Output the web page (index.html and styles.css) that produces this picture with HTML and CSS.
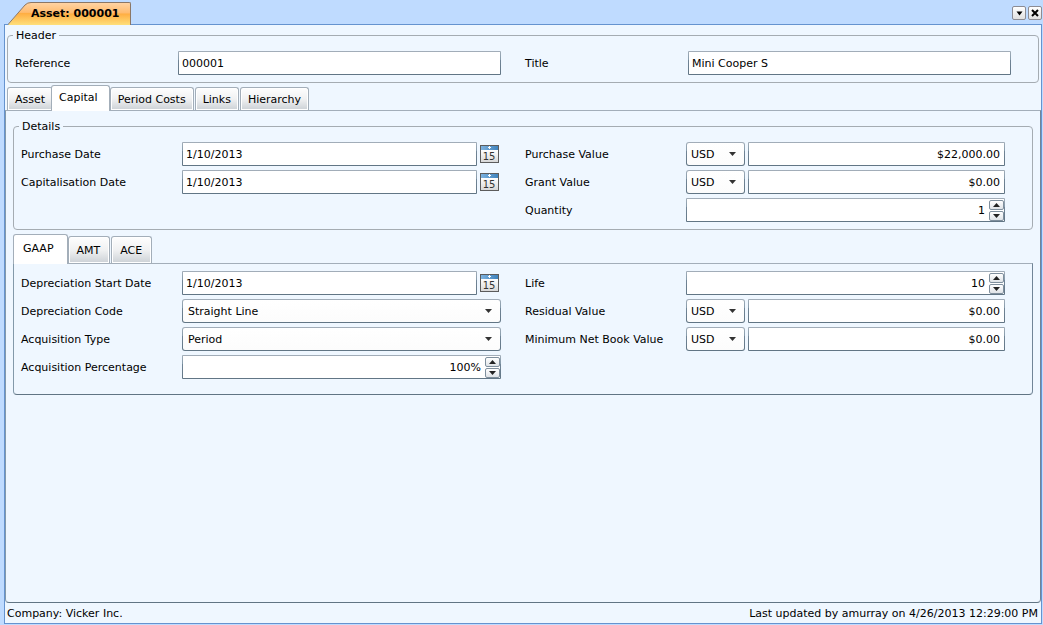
FILE: index.html
```html
<!DOCTYPE html>
<html lang="en">
<head>
  <meta charset="UTF-8">
  <title>Asset: 000001</title>
  <link rel="stylesheet" href="styles.css">
</head>
<body>

  <!-- Document tab strip -->
  <div class="title-bar">
    <button class="doc-tab">
      <svg class="slope" width="23" height="23" viewBox="0 0 23 23">
        <defs>
          <linearGradient id="orange" x1="0" y1="0" x2="0" y2="1">
            <stop offset="0" stop-color="#ffd3a3"/>
            <stop offset="0.45" stop-color="#ffbb6e"/>
            <stop offset="0.5" stop-color="#ffae42"/>
            <stop offset="1" stop-color="#fedf7b"/>
          </linearGradient>
        </defs>
        <path d="M0 23 L17 3 Q19.500 0 23 0 V23 Z" fill="url(#orange)"/>
        <path d="M0 22.500 L17 3 Q19.500 0.500 23 0.500" fill="none" stroke="#8b7766"/>
      </svg>
      <span class="doc-label">Asset: 000001</span>
    </button>
    <div class="window-buttons">
      <button aria-label="Window list"><svg width="7" height="5" viewBox="0 0 7 5"><path d="M0.500 0.500h6L3.500 4.500z" fill="#000"/></svg></button>
      <button aria-label="Close"><svg width="8" height="8" viewBox="0 0 8 8"><path d="M1 1l6 6M7 1l-6 6" stroke="#000" stroke-width="2"/></svg></button>
    </div>
  </div>

  <main class="window">
    <fieldset class="group header-group">
      <legend>Header</legend>
      <div class="columns">
        <div class="fields wide-labels">
          <label for="reference">Reference</label>
          <input class="box" id="reference" type="text" value="000001">
        </div>
        <div class="fields wide-labels">
          <label for="title">Title</label>
          <input class="box" id="title" type="text" value="Mini Cooper S">
        </div>
      </div>
    </fieldset>

    <nav class="tabs main-tabs">
      <button>Asset</button>
      <button class="selected">Capital</button>
      <button>Period Costs</button>
      <button>Links</button>
      <button>Hierarchy</button>
    </nav>

    <section class="panel main-panel">
      <fieldset class="group">
        <legend>Details</legend>
        <div class="columns">
          <div class="fields">
            <label for="purchase-date">Purchase Date</label>
            <div class="date">
              <input class="box" id="purchase-date" type="text" value="1/10/2013">
              <button aria-label="Pick purchase date"><svg width="19" height="18" viewBox="0 0 19 18"><use href="#calendar"/></svg></button>
            </div>
            <label for="capitalisation-date">Capitalisation Date</label>
            <div class="date">
              <input class="box" id="capitalisation-date" type="text" value="1/10/2013">
              <button aria-label="Pick capitalisation date"><svg width="19" height="18" viewBox="0 0 19 18"><use href="#calendar"/></svg></button>
            </div>
          </div>
          <div class="fields">
            <label for="purchase-value">Purchase Value</label>
            <div class="money">
              <select class="box" aria-label="Purchase currency"><option>USD</option></select>
              <input class="box number" id="purchase-value" type="text" value="$22,000.00">
            </div>
            <label for="grant-value">Grant Value</label>
            <div class="money">
              <select class="box" aria-label="Grant currency"><option>USD</option></select>
              <input class="box number" id="grant-value" type="text" value="$0.00">
            </div>
            <label for="quantity">Quantity</label>
            <div class="box spinner">
              <input class="number" id="quantity" type="text" value="1">
              <div class="arrows">
                <button aria-label="Increase"><svg width="7" height="4" viewBox="0 0 7 4"><path d="M0 4L3.500 0L7 4z"/></svg></button>
                <button aria-label="Decrease"><svg width="7" height="4" viewBox="0 0 7 4"><path d="M0 0h7L3.500 4z"/></svg></button>
              </div>
            </div>
          </div>
        </div>
      </fieldset>

      <nav class="tabs book-tabs">
        <button class="selected">GAAP</button>
        <button>AMT</button>
        <button>ACE</button>
      </nav>

      <section class="panel book-panel">
        <div class="columns">
          <div class="fields">
            <label for="start-date">Depreciation Start Date</label>
            <div class="date">
              <input class="box" id="start-date" type="text" value="1/10/2013">
              <button aria-label="Pick start date"><svg width="19" height="18" viewBox="0 0 19 18"><use href="#calendar"/></svg></button>
            </div>
            <label for="code">Depreciation Code</label>
            <select class="box" id="code"><option>Straight Line</option></select>
            <label for="acquisition-type">Acquisition Type</label>
            <select class="box" id="acquisition-type"><option>Period</option></select>
            <label for="percentage">Acquisition Percentage</label>
            <div class="box spinner">
              <input class="number" id="percentage" type="text" value="100%">
              <div class="arrows">
                <button aria-label="Increase"><svg width="7" height="4" viewBox="0 0 7 4"><path d="M0 4L3.500 0L7 4z"/></svg></button>
                <button aria-label="Decrease"><svg width="7" height="4" viewBox="0 0 7 4"><path d="M0 0h7L3.500 4z"/></svg></button>
              </div>
            </div>
          </div>
          <div class="fields">
            <label for="life">Life</label>
            <div class="box spinner">
              <input class="number" id="life" type="text" value="10">
              <div class="arrows">
                <button aria-label="Increase"><svg width="7" height="4" viewBox="0 0 7 4"><path d="M0 4L3.500 0L7 4z"/></svg></button>
                <button aria-label="Decrease"><svg width="7" height="4" viewBox="0 0 7 4"><path d="M0 0h7L3.500 4z"/></svg></button>
              </div>
            </div>
            <label for="residual-value">Residual Value</label>
            <div class="money">
              <select class="box" aria-label="Residual currency"><option>USD</option></select>
              <input class="box number" id="residual-value" type="text" value="$0.00">
            </div>
            <label for="book-value">Minimum Net Book Value</label>
            <div class="money">
              <select class="box" aria-label="Book value currency"><option>USD</option></select>
              <input class="box number" id="book-value" type="text" value="$0.00">
            </div>
          </div>
        </div>
      </section>
    </section>

    <footer class="status">
      <span>Company: Vicker Inc.</span>
      <span>Last updated by amurray on 4/26/2013 12:29:00 PM</span>
    </footer>
  </main>

  <!-- Shared calendar icon -->
  <svg class="symbols" width="0" height="0">
    <defs>
      <linearGradient id="page" x1="0" y1="0" x2="0" y2="1">
        <stop offset="0" stop-color="#fff"/>
        <stop offset="1" stop-color="#d8d8d8"/>
      </linearGradient>
      <linearGradient id="strip" x1="0" y1="0" x2="1" y2="0">
        <stop offset="0" stop-color="#7db2df"/>
        <stop offset="1" stop-color="#3f83bd"/>
      </linearGradient>
      <symbol id="calendar" viewBox="0 0 19 18">
        <rect width="19" height="18" fill="#5c5c5c"/>
        <rect x="1" y="1" width="17" height="4" fill="url(#strip)"/>
        <rect x="1" y="5" width="17" height="12" fill="url(#page)"/>
        <path d="M8 2.500h3M9.500 1v3" stroke="#fff"/>
        <text x="9" y="15" text-anchor="middle" font-size="10" font-family="DejaVu Sans, sans-serif" fill="#333">15</text>
      </symbol>
    </defs>
  </svg>

</body>
</html>
```
FILE: styles.css
```css
* {
  box-sizing: border-box;
}

body {
  margin: 0;
  padding: 0 1px 1px 4px;
  min-height: 100vh;
  display: flex;
  flex-direction: column;
  background: #bfdbff;
  color: #000;
  font-family: Verdana, "DejaVu Sans", sans-serif;
  font-size: 11px;
  line-height: 13px;
}

button,
input,
select {
  font: inherit;
  color: inherit;
  margin: 0;
}

button {
  padding: 0;
}

svg {
  display: block;
}

.symbols {
  position: absolute;
}

/* Title bar */
.title-bar {
  display: flex;
  justify-content: space-between;
  height: 24px;
  padding: 2px 0 0 4px;
}

.doc-tab {
  display: flex;
  height: 23px;
  border: none;
  background: none;
  font-weight: bold;
  z-index: 1;
}

.doc-label {
  height: 23px;
  padding: 4px 11px 0 0;
  border-top: 1px solid #8b7766;
  border-right: 1px solid #8b7766;
  border-top-right-radius: 2px;
  background: linear-gradient(#ffd3a3, #ffbb6e 45%, #ffae42 50%, #fedf7b);
}

.window-buttons {
  display: flex;
  gap: 2px;
  padding-top: 4px;
}

.window-buttons button {
  width: 14px;
  height: 14px;
  display: flex;
  align-items: center;
  justify-content: center;
  border: 1px solid #8c8c94;
  border-radius: 2px;
  background: linear-gradient(#fff, #e0e0e0);
}

/* Window */
.window {
  flex: 1;
  display: flex;
  flex-direction: column;
  border: 1px solid #6593cf;
  background: #eff7ff;
}

.group {
  margin: 9px 7px 0;
  padding: 9px 27px 7px 7px;
  min-width: 0;
  border: 1px solid #a5acb2;
  border-radius: 4px;
}

.group legend {
  margin-left: -2px;
  padding: 0 3px;
}

.header-group {
  margin: 4px 2px 0;
}

.columns {
  display: grid;
  grid-template-columns: 1fr 1fr;
  column-gap: 24px;
}

.fields {
  display: grid;
  grid-template-columns: 161px 1fr;
  grid-auto-rows: 24px;
  row-gap: 4px;
  align-items: center;
  align-content: start;
}

.wide-labels {
  grid-template-columns: 163px 1fr;
}

/* Fields */
.box {
  width: 100%;
  min-width: 0;
  height: 24px;
  padding: 0 3px;
  border: 1px solid transparent;
  border-radius: 1px;
  background: linear-gradient(#fff, #fff) padding-box,
    linear-gradient(#a3aeb9, #8399a9 38%, #718597 38%, #617584) border-box;
}

.number {
  padding: 0 4px;
  text-align: right;
}

select.box {
  appearance: none;
  padding: 0 5px;
  border-radius: 3px;
  background: url("data:image/svg+xml,%3Csvg xmlns='http://www.w3.org/2000/svg' width='7' height='4'%3E%3Cpath d='M0 0h7L3.500 4z' fill='%23333'/%3E%3C/svg%3E") no-repeat right 8px center,
    linear-gradient(#fff, #fcfcfc) padding-box,
    linear-gradient(#a3aeb9, #8399a9 38%, #718597 38%, #617584) border-box;
}

.date,
.money {
  display: flex;
  align-items: center;
  gap: 3px;
}

.date {
  padding-right: 2px;
}

.date .box,
.money .box {
  flex: 1;
}

.money select.box {
  flex: none;
  width: 59px;
  padding: 0 4px;
}

.date button {
  border: none;
  background: none;
}

.spinner {
  display: flex;
  padding: 0;
}

.spinner input {
  flex: 1;
  min-width: 0;
  border: none;
  background: none;
}

.arrows {
  display: flex;
  flex-direction: column;
  gap: 1px;
  padding-top: 1px;
}

.arrows button {
  width: 15px;
  height: 10px;
  display: flex;
  align-items: center;
  justify-content: center;
  border: 1px solid #7f8f9d;
  border-radius: 2px;
  background: linear-gradient(#fff, #dfe3e7);
  fill: #222;
}

/* Tabs */
.tabs {
  display: flex;
  align-items: flex-end;
}

.tabs button {
  height: 23px;
  padding: 0 7px;
  border: 1px solid #a3aeb9;
  border-bottom: none;
  border-radius: 3px 3px 0 0;
  box-shadow: inset 0 0 0 1px #fff;
  background: linear-gradient(#fefefe, #f0f1f2 50%, #ccd1d6);
}

.tabs button + button {
  margin-left: 1px;
}

.tabs .selected + button {
  margin-left: 0;
}

.tabs button.selected {
  margin-bottom: -1px;
  background: #fff;
  z-index: 1;
}

.main-tabs {
  height: 27px;
  padding-left: 2px;
}

.main-tabs button.selected {
  height: 26px;
  margin-left: -2px;
  padding: 0 11px 2px 7px;
}

.book-tabs {
  height: 33px;
  padding-left: 7px;
}

.book-tabs button {
  height: 27px;
  padding: 0 9px 0 8px;
}

.book-tabs button.selected {
  height: 30px;
  padding: 0 13px 2px 9px;
}

.panel {
  border: 1px solid #8399a9;
  border-color: #a3aeb9 #718597 #617584 #8399a9;
  border-radius: 0 0 4px 4px;
}

.main-panel {
  flex: 1;
}

.book-panel {
  margin: 0 7px;
  padding: 7px 27px 15px 7px;
}

.status {
  display: flex;
  justify-content: space-between;
  height: 20px;
  padding: 4px 3px 0 2px;
}
```
